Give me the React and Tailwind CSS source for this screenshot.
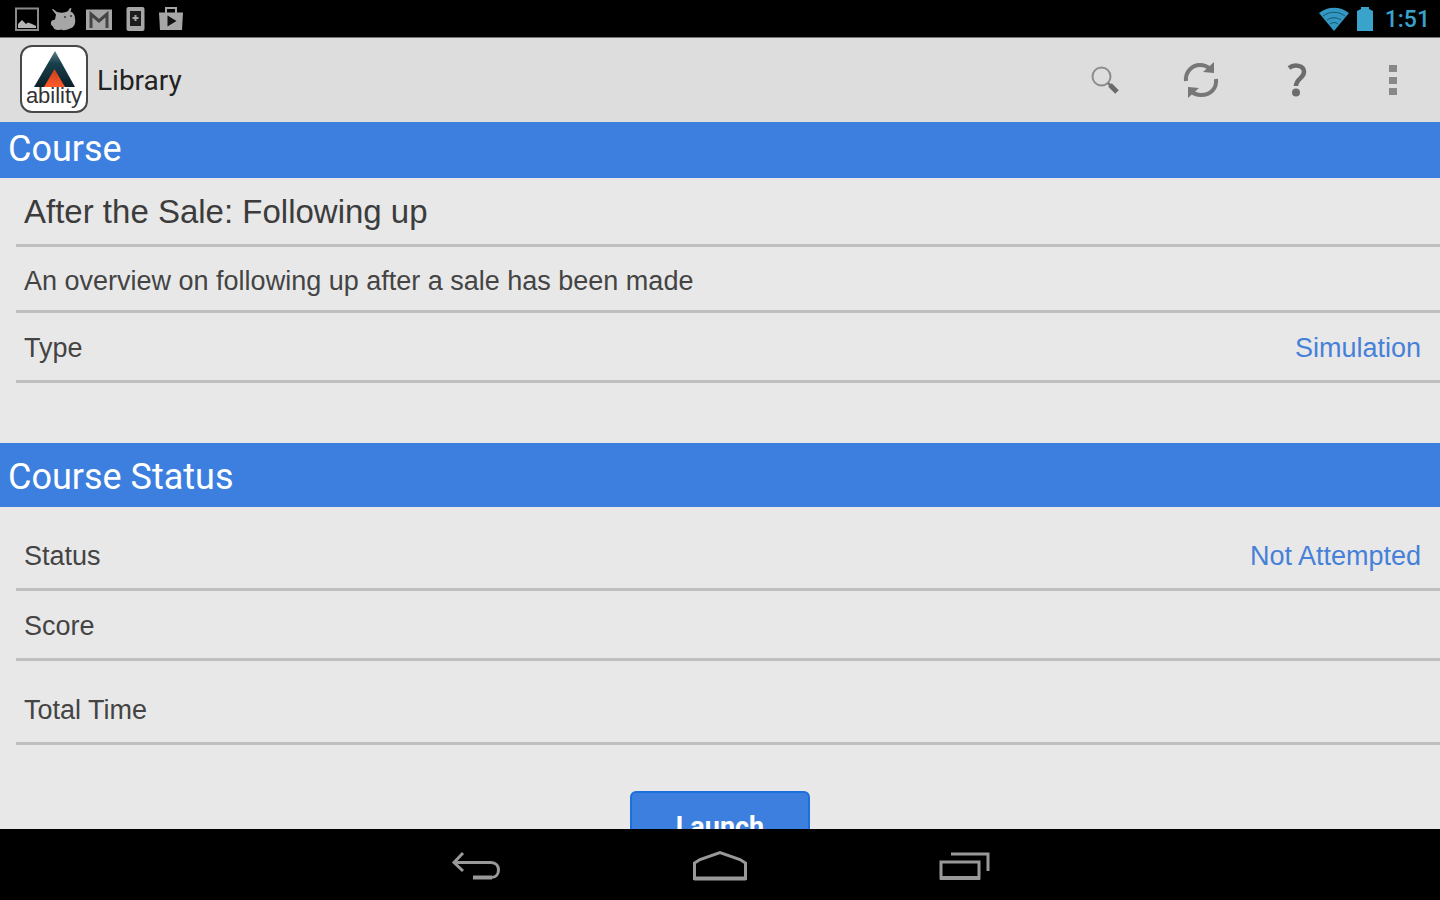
import React from 'react';

const COURSE = {
  title: 'After the Sale: Following up',
  description: 'An overview on following up after a sale has been made',
  type: 'Simulation',
  status: 'Not Attempted',
  score: '',
  totalTime: '',
};

const StatusBar = () => (
  <div className="flex h-[38px] shrink-0 items-center justify-between border-b border-[#777] bg-black pl-3.5 pr-2.5">
    <div className="flex items-center gap-2.5 text-[#a6a6a6]">
      <svg width="26" height="26" viewBox="0 0 26 26" fill="none" aria-hidden="true">
        <path d="M2 2.5h22v21.500H2z" stroke="#8a8a8a" strokeWidth="2" />
        <path d="M4 22v-4l4-4 4 4 2-1.500 4 1.500 4 2v2z" fill="#b5b5b5" />
      </svg>
      <svg width="26" height="26" viewBox="0 0 26 26" fill="currentColor" aria-hidden="true">
        <path d="M3 3l4 3c4 1 8 1 11-1l2-3 1.500.5-1 3c3 1 4.500 4 4.500 7 1 5-1 9-5 10-4 2-7 2-9 1-3 1-7 1-8-3-2-1-3-4-1-6l3-1 1-5-4-5z" />
        <circle cx="15" cy="11" r="1" fill="#333" />
        <circle cx="21" cy="10" r="1" fill="#333" />
      </svg>
      <svg width="26" height="26" viewBox="0 0 26 26" fill="none" aria-hidden="true">
        <path d="M0 3.500h26V24H0z" fill="currentColor" />
        <path d="M5 22V8l8 7 8-7v14" stroke="#444" strokeWidth="3" />
      </svg>
      <svg width="26" height="26" viewBox="0 0 26 26" fill="none" aria-hidden="true">
        <rect x="4.500" y="1" width="18" height="24" rx="2" fill="currentColor" />
        <path d="M8 5h11v15H8z" fill="#1c1c1c" />
        <path d="M13.500 9v6M10.500 12h6" stroke="currentColor" strokeWidth="2" />
      </svg>
      <svg width="26" height="26" viewBox="0 0 26 26" fill="none" aria-hidden="true">
        <path d="M8 7V2h10v5" stroke="currentColor" strokeWidth="2" />
        <path d="M1 6.500h24L24 24H2z" fill="currentColor" />
        <path d="M9.500 9.500l9 5.500-9 5.500z" fill="#111" />
      </svg>
    </div>
    <div className="flex items-center gap-2 text-[#39a3cc]">
      <svg width="30" height="24" viewBox="0 0 30 24" aria-hidden="true">
        <path d="M0 6C9-1 21-1 30 6L15 24z" fill="#3397c1" />
        <path d="M4 9c7-5 15-5 22 0M8 13c4-3 10-3 14 0M11 17c3-2 5-2 8 0" stroke="#14576f" strokeWidth="1" fill="none" />
      </svg>
      <svg width="16" height="24" viewBox="0 0 16 24" fill="currentColor" aria-hidden="true">
        <path d="M4 0h8v2l4 2v20H0V4l4-2z" />
      </svg>
      <time className="ml-1 pt-0.5 text-[23px] leading-6 font-medium">1:51</time>
    </div>
  </div>
);

const Logo = () => (
  <svg width="70" height="70" viewBox="0 0 70 70" role="img" aria-label="ability">
    <defs>
      <linearGradient id="peak" x1="0" y1="0" x2="0" y2="1">
        <stop offset="0" stopColor="#5d7d84" />
        <stop offset="0.35" stopColor="#173f4b" />
        <stop offset="1" stopColor="#0d2029" />
      </linearGradient>
      <linearGradient id="ember" x1="0" y1="0" x2="0" y2="1">
        <stop offset="0" stopColor="#c6401f" />
        <stop offset="1" stopColor="#ff5a28" />
      </linearGradient>
    </defs>
    <rect x="2" y="1" width="66" height="66" rx="11" fill="#fff" stroke="#484848" strokeWidth="2" />
    <path d="M36 6l20 36H15z" fill="url(#peak)" />
    <path d="M35.500 24L46 42H25z" fill="url(#ember)" />
    <text x="35" y="58" textAnchor="middle" fontFamily="'Liberation Sans', sans-serif" fontSize="22" fill="#333">
      ability
    </text>
  </svg>
);

const SearchIcon = () => (
  <svg width="28" height="28" viewBox="0 0 28 28" fill="none" aria-hidden="true">
    <circle cx="10.500" cy="10.500" r="9" stroke="#8c8c8c" strokeWidth="2" />
    <path d="M17 17l3 3" stroke="#777" strokeWidth="2.500" />
    <path d="M19 19l7 7" stroke="#6a6a6a" strokeWidth="5" />
  </svg>
);

const RefreshIcon = () => (
  <svg width="36" height="36" viewBox="0 0 36 36" fill="none" aria-hidden="true">
    <path d="M3 19C2 10 9 3 17 3c4 0 7 1 10 4" stroke="#777" strokeWidth="4" />
    <path d="M31 0v11l-11-1z" fill="#777" />
    <path d="M33 17c1 9-5 16-15 16-4 0-7-1-10-4" stroke="#777" strokeWidth="4" />
    <path d="M5 36V25l11 1z" fill="#777" />
  </svg>
);

const HelpIcon = () => (
  <svg width="20" height="34" viewBox="0 0 20 34" fill="none" aria-hidden="true">
    <path d="M2 5c5-4 15-3 15 4 0 6-8 7-8 14" stroke="#6c6c6c" strokeWidth="4.500" />
    <circle cx="9" cy="29.500" r="4" fill="#6c6c6c" />
  </svg>
);

const MoreIcon = () => (
  <svg width="8" height="32" viewBox="0 0 8 32" fill="#888" aria-hidden="true">
    <path d="M0 1h8v7H0zM0 13h8v7H0zM0 24h8v7H0z" />
  </svg>
);

const ACTIONS = [
  { id: 'search', label: 'Search', Icon: SearchIcon },
  { id: 'refresh', label: 'Refresh', Icon: RefreshIcon },
  { id: 'help', label: 'Help', Icon: HelpIcon },
  { id: 'more', label: 'More options', Icon: MoreIcon },
];

const ActionBar = () => (
  <header className="flex h-21 shrink-0 items-center justify-between bg-[#ddd] pl-[19px]">
    <div className="flex items-center gap-2">
      <Logo />
      <h1 className="pt-0.5 text-[28px] leading-8 text-[#222]">Library</h1>
    </div>
    <div className="-mr-px flex">
      {ACTIONS.map(({ id, label, Icon }) => (
        <button key={id} type="button" aria-label={label} className="flex h-21 w-24 items-center justify-center">
          <Icon />
        </button>
      ))}
    </div>
  </header>
);

const Row = ({ label, value, className }) => (
  <div
    className={`ml-4 flex items-end justify-between border-b-3 border-[#bfbfbf] pl-2 pr-[19px] text-[27px] leading-8 ${className}`}
  >
    <dt className="text-[#444]">{label}</dt>
    <dd className="text-[#4680d8]">{value}</dd>
  </div>
);

const NavigationBar = () => (
  <nav className="flex h-[71px] shrink-0 items-center justify-center bg-black pt-0.5 text-[#999]">
    <button type="button" aria-label="Back" className="flex h-full w-61 items-center justify-center">
      <svg width="50" height="30" viewBox="0 0 50 30" fill="none" stroke="currentColor" strokeWidth="3" aria-hidden="true">
        <path d="M12 2L3 11.500 12 20" />
        <path d="M4 11.500h36c10 0 10 15 0 15" />
        <path d="M41 26.500H22" strokeWidth="4" />
      </svg>
    </button>
    <button type="button" aria-label="Home" className="flex h-full w-61 items-center justify-center">
      <svg width="56" height="32" viewBox="0 0 56 32" fill="none" stroke="currentColor" strokeWidth="3" aria-hidden="true">
        <path d="M2.500 28.500V13L8 9.500 28 2.500l20 7 5.500 3.500v15.500z" />
        <path d="M2 28.500h52" strokeWidth="4" />
      </svg>
    </button>
    <button type="button" aria-label="Recent apps" className="flex h-full w-61 items-center justify-center">
      <svg width="52" height="30" viewBox="0 0 52 30" fill="none" stroke="currentColor" strokeWidth="3" aria-hidden="true">
        <path d="M3 11h38v16H3z" />
        <path d="M2 27h40" strokeWidth="4" />
        <path d="M13 3h37v17" />
      </svg>
    </button>
  </nav>
);

const App = () => (
  <div className="flex h-screen flex-col overflow-hidden bg-[#e8e8e8] font-['Roboto',sans-serif]">
    <StatusBar />
    <ActionBar />

    <main className="min-h-0 flex-1 overflow-hidden">
      <section>
        <h2 className="flex h-14 items-center bg-[#3d7fde] px-2 pb-0.5 text-4xl text-white">Course</h2>
        <div className="font-['Liberation_Sans',sans-serif] text-[#444]">
          <h3 className="ml-4 h-[69px] border-b-3 border-[#bfbfbf] pl-2 pt-3.5 text-[33px] leading-10 text-[#3c3c3c]">
            {COURSE.title}
          </h3>
          <p className="ml-4 h-[66px] border-b-3 border-[#bfbfbf] pl-2 pt-[18px] text-[27px] leading-8">
            {COURSE.description}
          </p>
          <dl>
            <Row label="Type" value={COURSE.type} className="h-[70px] pb-4" />
          </dl>
        </div>
      </section>

      <section className="mt-[60px]">
        <h2 className="flex h-16 items-center bg-[#3d7fde] px-2 pt-1 text-4xl text-white">Course Status</h2>
        <dl className="font-['Liberation_Sans',sans-serif]">
          <Row label="Status" value={COURSE.status} className="h-21 pb-4" />
          <Row label="Score" value={COURSE.score} className="h-[70px] pb-4" />
          <Row label="Total Time" value={COURSE.totalTime} className="h-21 pb-4" />
        </dl>
      </section>

      <div className="flex justify-center pt-[46px]">
        <button
          type="button"
          className="h-[72px] w-45 rounded-md border-2 border-[#1b70dc] bg-[#3d7fde] text-[27px] font-bold text-white"
        >
          Launch
        </button>
      </div>
    </main>

    <NavigationBar />
  </div>
);

export default App;
